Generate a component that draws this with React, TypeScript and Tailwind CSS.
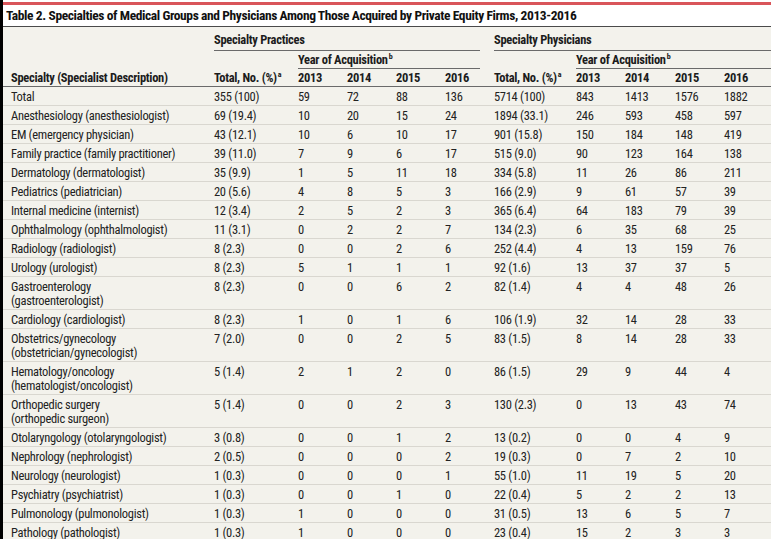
type Row = { name: string[]; p: string[]; s: string[] };

// name: one or two lines; p = practices (total + 4 years); s = physicians
const rows: Row[] = [
  { name: ['Total'], p: ['355 (100)', '59', '72', '88', '136'], s: ['5714 (100)', '843', '1413', '1576', '1882'] },
  { name: ['Anesthesiology (anesthesiologist)'], p: ['69 (19.4)', '10', '20', '15', '24'], s: ['1894 (33.1)', '246', '593', '458', '597'] },
  { name: ['EM (emergency physician)'], p: ['43 (12.1)', '10', '6', '10', '17'], s: ['901 (15.8)', '150', '184', '148', '419'] },
  { name: ['Family practice (family practitioner)'], p: ['39 (11.0)', '7', '9', '6', '17'], s: ['515 (9.0)', '90', '123', '164', '138'] },
  { name: ['Dermatology (dermatologist)'], p: ['35 (9.9)', '1', '5', '11', '18'], s: ['334 (5.8)', '11', '26', '86', '211'] },
  { name: ['Pediatrics (pediatrician)'], p: ['20 (5.6)', '4', '8', '5', '3'], s: ['166 (2.9)', '9', '61', '57', '39'] },
  { name: ['Internal medicine (internist)'], p: ['12 (3.4)', '2', '5', '2', '3'], s: ['365 (6.4)', '64', '183', '79', '39'] },
  { name: ['Ophthalmology (ophthalmologist)'], p: ['11 (3.1)', '0', '2', '2', '7'], s: ['134 (2.3)', '6', '35', '68', '25'] },
  { name: ['Radiology (radiologist)'], p: ['8 (2.3)', '0', '0', '2', '6'], s: ['252 (4.4)', '4', '13', '159', '76'] },
  { name: ['Urology (urologist)'], p: ['8 (2.3)', '5', '1', '1', '1'], s: ['92 (1.6)', '13', '37', '37', '5'] },
  { name: ['Gastroenterology', '(gastroenterologist)'], p: ['8 (2.3)', '0', '0', '6', '2'], s: ['82 (1.4)', '4', '4', '48', '26'] },
  { name: ['Cardiology (cardiologist)'], p: ['8 (2.3)', '1', '0', '1', '6'], s: ['106 (1.9)', '32', '14', '28', '33'] },
  { name: ['Obstetrics/gynecology', '(obstetrician/gynecologist)'], p: ['7 (2.0)', '0', '0', '2', '5'], s: ['83 (1.5)', '8', '14', '28', '33'] },
  { name: ['Hematology/oncology', '(hematologist/oncologist)'], p: ['5 (1.4)', '2', '1', '2', '0'], s: ['86 (1.5)', '29', '9', '44', '4'] },
  { name: ['Orthopedic surgery', '(orthopedic surgeon)'], p: ['5 (1.4)', '0', '0', '2', '3'], s: ['130 (2.3)', '0', '13', '43', '74'] },
  { name: ['Otolaryngology (otolaryngologist)'], p: ['3 (0.8)', '0', '0', '1', '2'], s: ['13 (0.2)', '0', '0', '4', '9'] },
  { name: ['Nephrology (nephrologist)'], p: ['2 (0.5)', '0', '0', '0', '2'], s: ['19 (0.3)', '0', '7', '2', '10'] },
  { name: ['Neurology (neurologist)'], p: ['1 (0.3)', '0', '0', '0', '1'], s: ['55 (1.0)', '11', '19', '5', '20'] },
  { name: ['Psychiatry (psychiatrist)'], p: ['1 (0.3)', '0', '0', '1', '0'], s: ['22 (0.4)', '5', '2', '2', '13'] },
  { name: ['Pulmonology (pulmonologist)'], p: ['1 (0.3)', '1', '0', '0', '0'], s: ['31 (0.5)', '13', '6', '5', '7'] },
  { name: ['Pathology (pathologist)'], p: ['1 (0.3)', '1', '0', '0', '0'], s: ['23 (0.4)', '15', '2', '3', '3'] },
];

const grid =
  'grid grid-cols-[203px_84px_49px_49px_49px_49px_82px_49px_50px_49px_1fr]';

function Sup({ children }: { children: string }) {
  return <sup className="-top-[5px] ml-[1px] text-[8px] font-bold">{children}</sup>;
}

function BodyRow({ row }: { row: Row }) {
  return (
    <div className={`${grid} border-b border-[#d9d7d0] pt-[3px] pb-[1px] leading-[14px]`}>
      <div className="pl-2">
        {row.name.map((line) => (
          <div key={line}>{line}</div>
        ))}
      </div>
      {[...row.p, ...row.s].map((v, i) => (
        <div key={i} className="pl-2">
          {v}
        </div>
      ))}
    </div>
  );
}

export default function App() {
  return (
    <div className="flex min-h-[539px] w-[771px] overflow-hidden bg-black font-['Roboto_Condensed','Roboto',sans-serif] text-[12.5px] tracking-[-0.3px] text-[#222]">
      <div className="w-[3px] shrink-0" />
      <div className="flex-1 bg-[#f3f2ec]">
        <div className="bg-white pt-[2px]">
          <div className="h-[3px] bg-[#d9555a]" />
          <div className="flex h-[22px] items-center border-b border-[#4a4a4a] pl-[3px] text-[13.5px] font-bold tracking-[-0.4px] text-[#111]">
            Table 2. Specialties of Medical Groups and Physicians Among Those Acquired by Private Equity Firms, 2013-2016
          </div>
        </div>

        <div className="font-bold text-[#1c1c1c]">
          <div className={grid}>
            <div />
            <div className="col-span-5 pl-2 pr-[6px]">
              <div className="flex h-[24px] items-end border-b border-[#6a6a6a] pb-[3px] leading-[14px]">
                Specialty Practices
              </div>
            </div>
            <div className="col-span-5 pl-2">
              <div className="flex h-[24px] items-end border-b border-[#6a6a6a] pb-[3px] leading-[14px]">
                Specialty Physicians
              </div>
            </div>
          </div>
          <div className={grid}>
            <div />
            <div />
            <div className="col-span-4 pl-2 pr-[6px]">
              <div className="flex h-[18px] items-center border-b border-[#6a6a6a] pt-[1px] leading-[14px]">
                <span>
                  Year of Acquisition<Sup>b</Sup>
                </span>
              </div>
            </div>
            <div />
            <div className="col-span-4 pl-2">
              <div className="flex h-[18px] items-center border-b border-[#6a6a6a] pt-[1px] leading-[14px]">
                <span>
                  Year of Acquisition<Sup>b</Sup>
                </span>
              </div>
            </div>
          </div>
          <div className={`${grid} h-[18px] items-center border-b border-[#6a6a6a] pt-[1px] leading-[14px]`}>
            <div className="pl-2">Specialty (Specialist Description)</div>
            <div className="pl-2">
              Total, No. (%)<Sup>a</Sup>
            </div>
            <div className="pl-2">2013</div>
            <div className="pl-2">2014</div>
            <div className="pl-2">2015</div>
            <div className="pl-2">2016</div>
            <div className="pl-2">
              Total, No. (%)<Sup>a</Sup>
            </div>
            <div className="pl-2">2013</div>
            <div className="pl-2">2014</div>
            <div className="pl-2">2015</div>
            <div className="pl-2">2016</div>
          </div>
        </div>

        <div>
          {rows.map((r) => (
            <BodyRow key={r.name.join(' ')} row={r} />
          ))}
        </div>
      </div>
    </div>
  );
}
